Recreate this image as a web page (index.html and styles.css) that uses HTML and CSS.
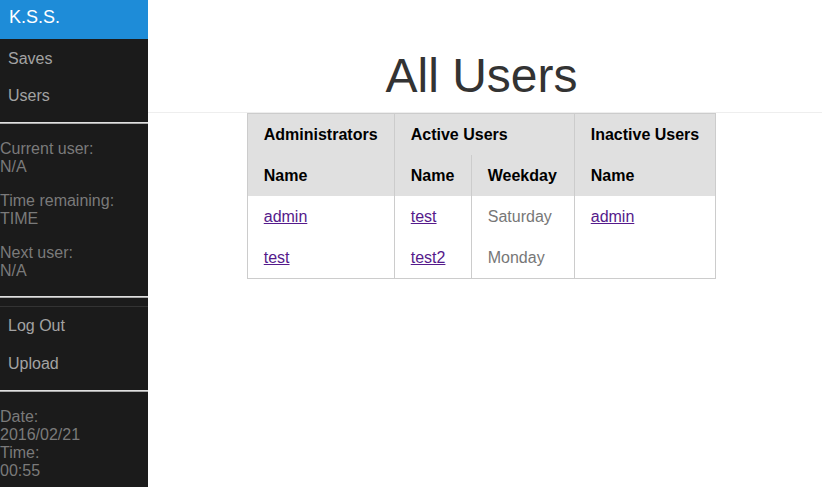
FILE: index.html
```html
<!DOCTYPE html>
<html>
<head>
<meta charset="utf-8">
<title>All Users</title>
<link rel="stylesheet" href="styles.css">
</head>
<body>
<div class="layout">
  <aside class="sidebar">
    <div class="brand">K.S.S.</div>
    <ul class="nav nav-top">
      <li><a href="#">Saves</a></li>
      <li><a href="#">Users</a></li>
    </ul>
    <div class="sep"></div>
    <div class="info">
      <p>Current user:<br>N/A</p>
      <p>Time remaining:<br>TIME</p>
      <p>Next user:<br>N/A</p>
    </div>
    <div class="sep"></div>
    <ul class="nav nav-bottom">
      <li><a href="#">Log Out</a></li>
      <li><a href="#">Upload</a></li>
    </ul>
    <div class="sep"></div>
    <div class="clock">
      Date:<br>2016/02/21<br>Time:<br>00:55
    </div>
  </aside>
  <main class="main">
    <header class="page-head">
      <h1>All Users</h1>
    </header>
    <table class="users">
      <thead>
        <tr>
          <th class="c-admin">Administrators</th>
          <th colspan="2" class="bl">Active Users</th>
          <th class="bl">Inactive Users</th>
        </tr>
        <tr>
          <th>Name</th>
          <th class="bl c-name">Name</th>
          <th class="bl c-week">Weekday</th>
          <th class="bl">Name</th>
        </tr>
      </thead>
      <tbody>
        <tr>
          <td><a href="#">admin</a></td>
          <td class="bl"><a href="#">test</a></td>
          <td class="bl day">Saturday</td>
          <td class="bl"><a href="#">admin</a></td>
        </tr>
        <tr>
          <td><a href="#">test</a></td>
          <td class="bl"><a href="#">test2</a></td>
          <td class="bl day">Monday</td>
          <td class="bl"></td>
        </tr>
      </tbody>
    </table>
  </main>
</div>
</body>
</html>
```
FILE: styles.css
```css
html, body {
  margin: 0;
  padding: 0;
  height: 100%;
  background: #fff;
  font-family: "Liberation Sans", Arial, sans-serif;
  font-size: 16px;
}

.layout {
  display: flex;
  min-height: 100%;
}

.sidebar {
  width: 148px;
  flex: 0 0 148px;
  background: #1b1b1b;
  min-height: 487px;
}

.brand {
  background: #1e8cd8;
  color: #fff;
  font-size: 18px;
  line-height: 21px;
  padding: 7px 9px 11px;
}

.nav {
  list-style: none;
  margin: 0;
  padding: 0;
}

.nav a {
  display: block;
  color: #a3a3a3;
  text-decoration: none;
  line-height: 19px;
}

.nav-top {
  padding: 1px 0 8px;
}

.nav-top a {
  padding: 9px 8px 9px;
}

.nav-bottom {
  margin-top: 8px;
  border-top: 1px solid #333;
  padding-bottom: 7px;
}

.nav-bottom a {
  padding: 9px 8px 10px;
}

.sep {
  height: 1px;
  background: #e0e0e0;
  border-bottom: 1px solid #a8a8a8;
}

.info {
  color: #7a7a7a;
  line-height: 18px;
  padding: 16px 0;
}

.info p {
  margin: 0 0 16px;
}

.info p:last-child {
  margin-bottom: 0;
}

.clock {
  color: #7a7a7a;
  line-height: 18px;
  padding-top: 16px;
}

.main {
  flex: 1;
  display: flex;
  flex-direction: column;
  align-items: center;
}

.page-head {
  align-self: stretch;
  border-bottom: 1px solid #eee;
  height: 113px;
  display: flex;
  justify-content: center;
  padding-right: 7px;
  box-sizing: border-box;
}

.page-head h1 {
  margin: 48px 0 0;
  font-size: 48px;
  font-weight: normal;
  color: #333;
  line-height: 55px;
}

.users {
  border-collapse: collapse;
  border: 1px solid #ccc;
  margin-right: 7px;
}

.users th,
.users td {
  padding: 11px 16px;
  line-height: 19px;
  text-align: left;
  white-space: nowrap;
}

.users th.c-admin {
  width: 114px;
}

.users th.c-name {
  width: 44px;
}

.users th.c-week {
  width: 70px;
}

.users th {
  background: #e0e0e0;
  color: #000;
  font-weight: bold;
}

.users td a {
  color: #551a8b;
  text-decoration: underline;
}

.users td.day {
  color: #777;
}

.users .bl {
  border-left: 1px solid #ccc;
}
```
